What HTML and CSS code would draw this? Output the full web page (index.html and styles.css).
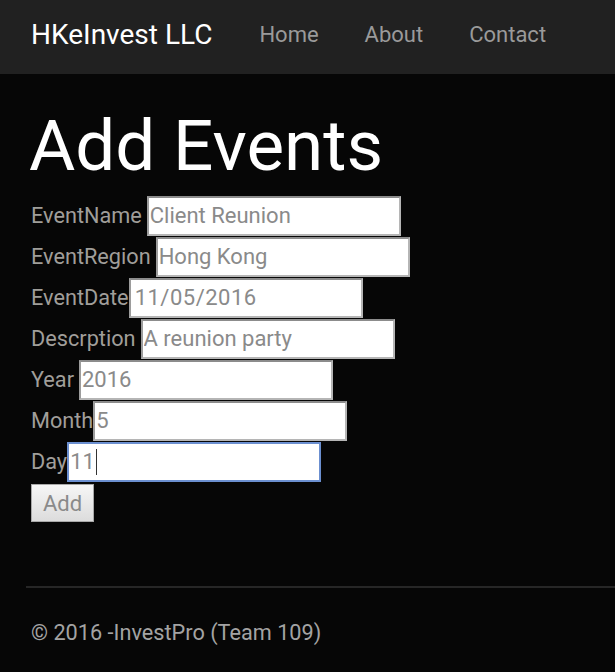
FILE: index.html
```html
<!DOCTYPE html>
<html lang="en">
<head>
<meta charset="utf-8">
<title>Add Events - HKeInvest LLC</title>
<link rel="stylesheet" href="styles.css">
</head>
<body>
<nav class="navbar">
  <a class="brand" href="#">HKeInvest LLC</a>
  <ul class="nav-links">
    <li><a href="#">Home</a></li>
    <li><a href="#">About</a></li>
    <li><a href="#">Contact</a></li>
  </ul>
</nav>
<main class="content">
  <h1 class="title">Add Events</h1>
  <form class="event-form">
    <div class="row"><label class="lbl">EventName</label><input class="field gap" type="text" value="Client Reunion"></div>
    <div class="row"><label class="lbl">EventRegion</label><input class="field gap" type="text" value="Hong Kong"></div>
    <div class="row"><label class="lbl">EventDate</label><input class="field date" type="text" value="11/05/2016"></div>
    <div class="row"><label class="lbl">Descrption</label><input class="field gap" type="text" value="A reunion party"></div>
    <div class="row"><label class="lbl">Year</label><input class="field gap" type="text" value="2016"></div>
    <div class="row"><label class="lbl">Month</label><input class="field" type="text" value="5"></div>
    <div class="row"><label class="lbl">Day</label><div class="field focused" role="textbox">11<span class="caret"></span></div></div>
    <div class="row"><button class="btn" type="button">Add</button></div>
  </form>
</main>
<hr class="divider">
<footer class="footer">© 2016 -InvestPro (Team 109)</footer>
</body>
</html>
```

FILE: styles.css
```css
html, body {
  margin: 0;
  padding: 0;
  background: #060606;
  font-family: Roboto, "Liberation Sans", sans-serif;
}

.navbar {
  height: 74px;
  background: #212121;
  display: flex;
  align-items: center;
  padding: 0 0 6px 31px;
  box-sizing: border-box;
}

.brand {
  color: #fff;
  text-decoration: none;
  font-size: 28px;
}

.nav-links {
  list-style: none;
  display: flex;
  margin: 0 0 0 47px;
  padding: 0;
  gap: 46px;
}

.nav-links a {
  color: #9a9a9a;
  text-decoration: none;
  font-size: 22px;
}

.content {
  padding-left: 31px;
}

.title {
  margin: 30px 0 8px -2px;
  font-weight: 400;
  font-size: 71px;
  line-height: 83px;
  color: #fff;
}

.event-form {
  display: flex;
  flex-direction: column;
}

.row {
  display: flex;
  align-items: center;
  height: 41px;
}

.lbl {
  color: #a09e9a;
  font-size: 21.7px;
}

.field {
  box-sizing: border-box;
  width: 254px;
  height: 40px;
  border: 2px solid #b5b5b5;
  border-top-color: #8c8c8c;
  border-left-color: #9c9c9c;
  background: #fff;
  color: #8a8a8a;
  font-family: Roboto, "Liberation Sans", sans-serif;
  font-size: 22px;
  padding: 0 1px;
  outline: none;
  display: flex;
  align-items: center;
}

.field.gap {
  margin-left: 5px;
}

.field.date {
  width: 234px;
  padding-left: 4px;
  letter-spacing: 0.5px;
}

.field.focused {
  border: 2px solid #6b8fd0;
}

.caret {
  display: inline-block;
  width: 1px;
  height: 26px;
  background: #333;
  margin-left: 1px;
}

.btn {
  box-sizing: border-box;
  width: 63px;
  height: 38px;
  margin-top: 1px;
  border: 1px solid #a8a8a8;
  background: linear-gradient(#f6f6f6, #dcdcdc);
  color: #8a8a8a;
  font-family: Roboto, "Liberation Sans", sans-serif;
  font-size: 22px;
  padding: 0;
}

.divider {
  margin: 63px 0 0 26px;
  border: 0;
  border-top: 2px solid #262626;
}

.footer {
  padding-left: 31px;
  margin-top: 32px;
  color: #a3a3a3;
  font-size: 21.7px;
}
```
